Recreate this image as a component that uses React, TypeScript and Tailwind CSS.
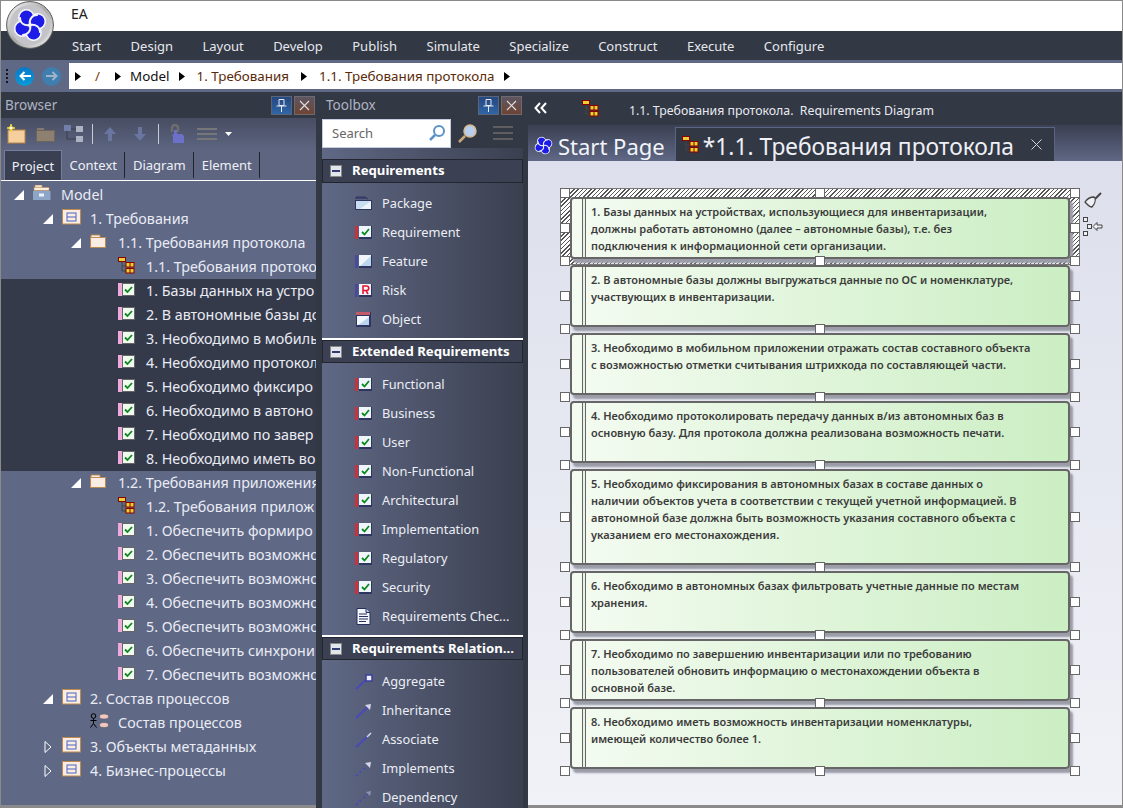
import { ReactNode } from 'react';

const SANS = "font-['Noto_Sans',sans-serif]";

const MENU = ['Start', 'Design', 'Layout', 'Develop', 'Publish', 'Simulate', 'Specialize', 'Construct', 'Execute', 'Configure'];

type Kind = 'model' | 'pkg' | 'folder' | 'diagram' | 'req' | 'usecase';
type Row = { depth: number; text: string; kind: Kind; arrow?: 'open' | 'closed'; dark?: boolean };

const TREE: Row[] = [
  { depth: 0, text: 'Model', kind: 'model', arrow: 'open' },
  { depth: 1, text: '1. Требования', kind: 'pkg', arrow: 'open' },
  { depth: 2, text: '1.1. Требования протокола', kind: 'folder', arrow: 'open' },
  { depth: 3, text: '1.1. Требования протоко', kind: 'diagram' },
  { depth: 3, text: '1. Базы данных на устро', kind: 'req', dark: true },
  { depth: 3, text: '2. В автономные базы до', kind: 'req', dark: true },
  { depth: 3, text: '3. Необходимо в мобиль', kind: 'req', dark: true },
  { depth: 3, text: '4. Необходимо протокол', kind: 'req', dark: true },
  { depth: 3, text: '5. Необходимо фиксиро', kind: 'req', dark: true },
  { depth: 3, text: '6. Необходимо в автоно', kind: 'req', dark: true },
  { depth: 3, text: '7. Необходимо по завер', kind: 'req', dark: true },
  { depth: 3, text: '8. Необходимо иметь во', kind: 'req', dark: true },
  { depth: 2, text: '1.2. Требования приложения', kind: 'folder', arrow: 'open' },
  { depth: 3, text: '1.2. Требования прилож', kind: 'diagram' },
  { depth: 3, text: '1. Обеспечить формиро', kind: 'req' },
  { depth: 3, text: '2. Обеспечить возможно', kind: 'req' },
  { depth: 3, text: '3. Обеспечить возможно', kind: 'req' },
  { depth: 3, text: '4. Обеспечить возможно', kind: 'req' },
  { depth: 3, text: '5. Обеспечить возможно', kind: 'req' },
  { depth: 3, text: '6. Обеспечить синхрони', kind: 'req' },
  { depth: 3, text: '7. Обеспечить возможно', kind: 'req' },
  { depth: 1, text: '2. Состав процессов', kind: 'pkg', arrow: 'open' },
  { depth: 2, text: 'Состав процессов', kind: 'usecase' },
  { depth: 1, text: '3. Объекты метаданных', kind: 'pkg', arrow: 'closed' },
  { depth: 1, text: '4. Бизнес-процессы', kind: 'pkg', arrow: 'closed' },
];

const CARDS = [
  { lines: ['1. Базы данных на устройствах, использующиеся для инвентаризации,', 'должны работать автономно (далее – автономные базы), т.е. без', 'подключения к информационной сети организации.'], h: 'h-[62px]' },
  { lines: ['2. В автономные базы должны выгружаться данные по ОС и номенклатуре,', 'участвующих в инвентаризации.'], h: 'h-[62px]' },
  { lines: ['3. Необходимо в мобильном приложении отражать состав составного объекта', 'с возможностью отметки считывания штрихкода по составляющей части.'], h: 'h-[62px]' },
  { lines: ['4. Необходимо протоколировать передачу данных в/из автономных баз в', 'основную базу. Для протокола должна реализована возможность печати.'], h: 'h-[62px]' },
  { lines: ['5. Необходимо фиксирования в автономных базах в составе данных о', 'наличии объектов учета в соответствии с текущей учетной информацией. В', 'автономной базе должна быть возможность указания составного объекта с', 'указанием его местонахождения.'], h: 'h-[96px]' },
  { lines: ['6. Необходимо в автономных базах фильтровать учетные данные по местам', 'хранения.'], h: 'h-[62px]' },
  { lines: ['7. Необходимо по завершению инвентаризации или по требованию', 'пользователей обновить информацию о местонахождении объекта в', 'основной базе.'], h: 'h-[62px]' },
  { lines: ['8. Необходимо иметь возможность инвентаризации номенклатуры,', 'имеющей количество более 1.'], h: 'h-[62px]' },
];

type Tool = 'package' | 'req' | 'feature' | 'risk' | 'object' | 'doc' | 'aggregate' | 'inherit' | 'assoc' | 'impl' | 'dep';

const TOOLBOX: { title: string; white: boolean; items: [string, Tool][] }[] = [
  { title: 'Requirements', white: false, items: [['Package', 'package'], ['Requirement', 'req'], ['Feature', 'feature'], ['Risk', 'risk'], ['Object', 'object']] },
  {
    title: 'Extended Requirements', white: true,
    items: [['Functional', 'req'], ['Business', 'req'], ['User', 'req'], ['Non-Functional', 'req'], ['Architectural', 'req'], ['Implementation', 'req'], ['Regulatory', 'req'], ['Security', 'req'], ['Requirements Chec...', 'doc']],
  },
  { title: 'Requirements Relation...', white: true, items: [['Aggregate', 'aggregate'], ['Inheritance', 'inherit'], ['Associate', 'assoc'], ['Implements', 'impl'], ['Dependency', 'dep']] },
];

const LOBES = [
  [16.5, 16.5],
  [31.5, 16.5],
  [31.5, 31.5],
  [16.5, 31.5],
];

function Logo({ size, ring = true }: { size: number; ring?: boolean }) {
  return (
    <svg width={size} height={size} viewBox="0 0 48 48">
      <defs>
        <linearGradient id="ring" x1="0" y1="0" x2="1" y2="1">
          <stop offset="0" stopColor="#fafafa" />
          <stop offset="0.5" stopColor="#a8a8a8" />
          <stop offset="1" stopColor="#f2f2f2" />
        </linearGradient>
      </defs>
      {ring && <circle cx="24" cy="24" r="23.400" fill="url(#ring)" stroke="#5a5a5a" strokeWidth="1" />}
      {ring && <circle cx="24" cy="24" r="20" fill="#c4c4c8" />}
      <g transform={ring ? 'translate(24 24) scale(.8) rotate(20) translate(-24 -24)' : 'rotate(20 24 24)'}>
        {LOBES.map(([x, y]) => (
          <circle key={`o${x}${y}`} cx={x} cy={y} r="10.500" fill="#f4f4ff" />
        ))}
        {LOBES.map(([x, y]) => (
          <circle key={`i${x}${y}`} cx={x} cy={y} r="8.500" fill="#1c1ce6" />
        ))}
        <g fill="none" stroke="#f4f4ff" strokeWidth="2.400">
          <path d="M24 24C20 18 22 11 29 9" />
          <path d="M24 24C30 20 37 22 39 29" />
          <path d="M24 24C28 30 26 37 19 39" />
          <path d="M24 24C18 28 11 26 9 19" />
        </g>
      </g>
    </svg>
  );
}

function Tri({ open }: { open: boolean }) {
  return open ? (
    <svg width="10" height="10" viewBox="0 0 10 10" className="shrink-0">
      <path d="M0 10L10 0V10Z" fill="#fff" />
    </svg>
  ) : (
    <svg width="8" height="12" viewBox="0 0 8 12" className="ml-[1px] mr-[1px] shrink-0">
      <path d="M1 .5L7 6 1 11.500Z" fill="none" stroke="#fff" />
    </svg>
  );
}

function TreeIcon({ kind }: { kind: Kind }) {
  if (kind === 'model')
    return (
      <svg width="18" height="16" viewBox="0 0 18 16">
        <path d="M2 0h7v3H2z" fill="#f4e2cc" stroke="#b98a55" strokeWidth=".6" />
        <path d="M1 2.500h15v3H1z" fill="#fbeede" stroke="#c09257" strokeWidth=".6" />
        <path d="M0 6h17.500v9H0z" fill="#8ca6c8" />
        <path d="M6 8.500h5v3H6z" fill="#eef2f8" />
      </svg>
    );
  if (kind === 'pkg')
    return (
      <svg width="19" height="16" viewBox="0 0 19 16">
        <rect x=".5" y=".5" width="18" height="14.500" fill="#fbece4" stroke="#bd8a50" />
        <rect x="5" y="4" width="9" height="8" fill="none" stroke="#4766c0" />
        <path d="M5 8h9" stroke="#4766c0" />
      </svg>
    );
  if (kind === 'folder')
    return (
      <svg width="17" height="15" viewBox="0 0 17 15">
        <path d="M1 3V1h9v2" fill="#fbece4" stroke="#bd8a50" />
        <rect x=".5" y="3.500" width="15" height="10" fill="#fbece4" stroke="#bd8a50" />
      </svg>
    );
  if (kind === 'diagram') return <DiagramIcon />;
  if (kind === 'req')
    return (
      <svg width="17" height="13" viewBox="0 0 17 13">
        <rect x="0" y="0" width="4" height="13" fill="#eeaadd" />
        <rect x="4.500" y=".5" width="12" height="12" fill="#f1faee" stroke="#666" />
        <path d="M7 6.500l2.500 2.500 4.500-5" fill="none" stroke="#0a8a1e" strokeWidth="1.800" />
      </svg>
    );
  return (
    <svg width="21" height="16" viewBox="0 0 21 16">
      <circle cx="3.500" cy="3" r="2.300" fill="none" stroke="#000" />
      <path d="M3.500 5.500v5M.5 7.500h6M3.500 10.500l-3 4M3.500 10.500l3 4" stroke="#000" fill="none" />
      <ellipse cx="14" cy="3.500" rx="4.500" ry="2.500" fill="#f3c6c3" stroke="#555" strokeWidth=".5" />
      <ellipse cx="14" cy="12" rx="4.500" ry="2.500" fill="#f3c6c3" stroke="#555" strokeWidth=".5" />
    </svg>
  );
}

function DiagramIcon() {
  return (
    <svg width="17" height="17" viewBox="0 0 17 17" className="shrink-0">
      <path d="M4 5v9h4M4 9h4" stroke="#444" fill="none" />
      <rect x=".5" y=".5" width="7" height="4" fill="#e6d232" stroke="#8c0000" />
      <rect x="8" y="5.500" width="8" height="4.500" fill="#e6d232" stroke="#8c0000" />
      <rect x="8" y="11.500" width="8" height="4.500" fill="#e6d232" stroke="#8c0000" />
      <path d="M12 5.500v4.500M12 11.500v4.500" stroke="#8c0000" />
    </svg>
  );
}

function ToolIcon({ t }: { t: Tool }) {
  const common = { width: 17, height: 15, viewBox: '0 0 17 15' };
  if (t === 'package')
    return (
      <svg {...common}>
        <path d="M1 3V1h9l3 2" fill="#3d4570" stroke="#2e3560" />
        <path d="M0 4h17v10H0z" fill="#2d3460" />
        <path d="M1 5h15v8H1z" fill="#c9ddf2" />
        <path d="M5 13L16 5v8z" fill="#eef4fb" />
      </svg>
    );
  if (t === 'doc')
    return (
      <svg {...common} height="17" viewBox="0 0 15 17">
        <path d="M1 .5h9l4 4v12H1z" fill="#f3f6fb" stroke="#27305c" />
        <path d="M3 6h8M3 8.500h9M3 11h9M3 13.500h7" stroke="#27305c" />
        <path d="M10 .5v4h4" fill="#b9cbe6" stroke="#27305c" />
      </svg>
    );
  if (t === 'aggregate' || t === 'inherit' || t === 'assoc' || t === 'impl' || t === 'dep') {
    const dash = t === 'impl' || t === 'dep' ? '2 3' : undefined;
    return (
      <svg width="18" height="16" viewBox="0 0 18 16">
        <path d="M1 15L13 4" stroke="#4a49b8" strokeWidth="2" strokeDasharray={dash} />
        {t === 'aggregate' && <rect x="11" y="1" width="6" height="6" fill="#eef" stroke="#3a3f9c" strokeWidth="1.500" />}
        {(t === 'inherit' || t === 'impl') && <path d="M16 1l-1 6-5-5z" fill="#d6d8ea" />}
        {t === 'assoc' && <path d="M12 5l4-4" stroke="#cfe2f2" strokeWidth="1.500" />}
        {t === 'dep' && <path d="M16 1l-1 5-4-4z" fill="#8f93b5" />}
      </svg>
    );
  }
  if (t === 'object')
    return (
      <svg {...common}>
        <rect x="1" y="0" width="15" height="15" fill="#2e3560" />
        <rect x="1" y="0" width="14" height="3" fill="#c25a68" />
        <rect x="2" y="4" width="12" height="9" fill="#f4f8fd" />
        <path d="M3 13L14 5v8z" fill="#bcd6f0" />
      </svg>
    );
  const fill = t === 'req' ? '#c8323c' : '#4a4a9a';
  return (
    <svg {...common}>
      <rect x="0" y="1" width="3" height="13" fill={fill} />
      <rect x="4" y="1" width="13" height="13" fill="#2e3560" />
      <rect x="4" y="1" width="12" height="11" fill="#f0f5fb" />
      {t === 'req' && <path d="M7 7l2.500 2.500L14 4" fill="none" stroke="#0a8a1e" strokeWidth="1.800" />}
      {t === 'feature' && <path d="M5 12L16 2v10z" fill="#bcd6f0" />}
      {t === 'risk' && <path d="M8 11V3h3.500a2 2 0 010 4.500H8M11 7.500L13 11" fill="none" stroke="#e8142c" strokeWidth="1.600" />}
    </svg>
  );
}

function PaneButtons() {
  return (
    <div className="flex gap-[2px]">
      <div className="flex h-[19px] w-[21px] items-center justify-center border border-[#5c6478] bg-gradient-to-b from-[#25487f] to-[#2f66a8]">
        <svg width="11" height="13" viewBox="0 0 11 13" fill="none" stroke="#e6e9f0">
          <path d="M3 .5h5v6H3zM.5 7h10M5.500 7v6" />
        </svg>
      </div>
      <div className="flex h-[19px] w-[21px] items-center justify-center border border-[#6e6a70] bg-gradient-to-b from-[#5d5560] to-[#6f4433]">
        <svg width="11" height="11" viewBox="0 0 11 11" stroke="#ddd" strokeWidth="1.200">
          <path d="M1 1l9 9M10 1l-9 9" />
        </svg>
      </div>
    </div>
  );
}

function Crumb({ children }: { children?: ReactNode }) {
  return (
    <>
      <svg width="6" height="9" viewBox="0 0 6 9" className="shrink-0">
        <path d="M0 0l6 4.500L0 9z" fill="#000" />
      </svg>
      {children}
    </>
  );
}

function Handle({ className }: { className: string }) {
  return <div className={`absolute z-20 h-[10px] w-[10px] border border-[#666] bg-white ${className}`} />;
}

function Card({ lines, h, first }: { lines: string[]; h: string; first: boolean }) {
  return (
    <div className={`relative w-[500px] ${h}`}>
      {first && (
        <div className="absolute -left-[10px] -right-[10px] -top-[9px] -bottom-[6px] border border-[#777] bg-[repeating-linear-gradient(135deg,#555_0,#555_1px,#fff_1px,#fff_3px)]" />
      )}
      <div className="absolute inset-0 flex overflow-hidden rounded-[4px] border-2 border-[#666] bg-gradient-to-r from-[#f4fbf1] to-[#cbeec3] shadow-[3px_4px_2px_#9a9ca8]">
        <div className="ml-[10px] h-full w-[4px] shrink-0 border-x border-[#666] bg-[#e8f2e4]" />
        <div className="pl-[5px] pt-[4px] text-[11px] font-semibold leading-[17px] text-[#3c3c3c] whitespace-nowrap">
          {lines.map((l) => (
            <div key={l}>{l}</div>
          ))}
        </div>
      </div>
      {first && (
        <>
          <Handle className="-left-[10px] -top-[9px]" />
          <Handle className="left-[245px] -top-[9px]" />
          <Handle className="-right-[10px] -top-[9px]" />
        </>
      )}
      <Handle className="-left-[10px] top-1/2 -translate-y-1/2" />
      <Handle className="-right-[10px] top-1/2 -translate-y-1/2" />
      <Handle className="-left-[10px] -bottom-[7px]" />
      <Handle className="left-[245px] -bottom-[7px]" />
      <Handle className="-right-[10px] -bottom-[7px]" />
      {first && (
        <>
          <svg width="19" height="17" viewBox="0 0 19 17" className="absolute left-[514px] -top-[5px]">
            <path d="M17 1l-6 6" stroke="#444" strokeWidth="2" />
            <path d="M10 5c-3 0-7 2-9 5 2 2 4 5 7 5 2-2 4-6 3-9z" fill="#eef0f5" stroke="#444" strokeWidth="1.300" />
          </svg>
          <svg width="21" height="20" viewBox="0 0 21 20" className="absolute left-[512px] top-[20px]" fill="#eef0f5" stroke="#444">
            <rect x="1.500" y=".5" width="4" height="4" />
            <rect x="5.500" y="7.500" width="4" height="4" />
            <rect x="1.500" y="14.500" width="4" height="4" />
            <path d="M11 9.500l4-4v2.500h5v3h-5v2.500z" />
          </svg>
        </>
      )}
    </div>
  );
}

export default function App() {
  return (
    <div className={`${SANS} relative flex h-[808px] w-[1123px] flex-col overflow-hidden border-t border-l border-r border-[#8a8a8a] bg-[#323844] text-[14px]`}>
      <div className="absolute left-[5px] top-0 z-30">
        <Logo size={48} />
      </div>

      {/* title + ribbon menu */}
      <div className="flex h-[30px] shrink-0 items-center bg-white pb-[5px] pl-[70px] text-[14px] text-[#222]">EA</div>
      <div className="flex h-[29px] shrink-0 items-center gap-[29.400px] bg-[#323844] pl-[71px] pt-[3px] text-[13px] text-[#e6e8ee]">
        {MENU.map((m) => (
          <span key={m}>{m}</span>
        ))}
      </div>

      {/* address bar */}
      <div className="flex h-[32px] shrink-0 items-start bg-[#5f6885]">
        <div className="flex h-[29px] w-[68px] shrink-0 items-center pl-[5px] pt-[3px]">
          <div className="mr-[3px] flex h-[14px] w-[2px] flex-col justify-between">
            {[0, 1, 2, 3].map((i) => (
              <div key={i} className="h-[2px] w-[2px] bg-[#16181f]" />
            ))}
          </div>
          <div className="ml-[4px] flex h-[19px] w-[19px] items-center justify-center rounded-full bg-gradient-to-b from-[#0a78c8] to-[#0a9ad8] text-white">
            <svg width="12" height="10" viewBox="0 0 12 10" fill="none" stroke="#fff" strokeWidth="2">
              <path d="M12 5H2M5.500 1L1.500 5l4 4" />
            </svg>
          </div>
          <div className="ml-[8px] flex h-[19px] w-[19px] items-center justify-center rounded-full bg-[#3f7fb0]">
            <svg width="12" height="10" viewBox="0 0 12 10" fill="none" stroke="#9fb4c8" strokeWidth="2">
              <path d="M0 5h10M6.500 1l4 4-4 4" />
            </svg>
          </div>
        </div>
        <div className="mt-[3px] flex h-[26px] flex-1 items-center bg-white pl-[6px] text-[13.400px] text-[#111]">
          <Crumb />
          <span className="ml-[14px] mr-[15px] text-[#7a3a10]">/</span>
          <Crumb />
          <span className="ml-[9px] mr-[10px]">Model</span>
          <Crumb />
          <span className="ml-[11px] mr-[12px] text-[#5a2a08]">1. Требования</span>
          <Crumb />
          <span className="ml-[12px] mr-[10px] text-[#5a2a08]">1.1. Требования протокола</span>
          <Crumb />
        </div>
      </div>

      <div className="flex min-h-0 flex-1">
        {/* browser */}
        <div className="flex w-[315px] shrink-0 flex-col">
          <div className="flex h-[26px] shrink-0 items-center justify-between pl-[4px] pr-[1px] text-[#aeb3c2] text-[13.500px]">
            Browser
            <PaneButtons />
          </div>
          <div className="flex h-[32px] shrink-0 items-center bg-gradient-to-b from-[#474d62] to-[#5d6581] pl-[5px]">
            <svg width="21" height="20" viewBox="0 0 21 20">
              <rect x="2" y="6" width="17" height="13" fill="#f5cf9e" stroke="#b78444" />
              <path d="M5 0l1 3 3 1-3 1-1 3-1-3-3-1 3-1z" fill="#fff" stroke="#e8d030" />
            </svg>
            <svg width="20" height="16" viewBox="0 0 20 16" className="ml-[9px]">
              <path d="M1 2h7v2H1z" fill="#85786c" />
              <rect x=".5" y="4.500" width="18" height="11" fill="#8d8070" stroke="#6f6459" />
            </svg>
            <svg width="20" height="18" viewBox="0 0 20 18" fill="#aeb3c4" className="ml-[8px]">
              <rect x="0" y="0" width="7" height="6" fill="#6f7fa8" />
              <rect x="12" y="1" width="7" height="6" />
              <rect x="12" y="11" width="7" height="6" />
              <path d="M3 6v8h9M7 4h5" stroke="#3a3f50" fill="none" />
            </svg>
            <div className="ml-[8px] h-[20px] w-[1px] bg-[#c8ccd8]" />
            <svg width="14" height="16" viewBox="0 0 14 16" fill="#6a76a0" className="ml-[10px]">
              <path d="M7 1l6 7H9v7H5V8H1z" />
            </svg>
            <svg width="14" height="16" viewBox="0 0 14 16" fill="#6a76a0" className="ml-[16px]">
              <path d="M7 15l6-7H9V1H5v7H1z" />
            </svg>
            <div className="ml-[11px] h-[20px] w-[1px] bg-[#c8ccd8]" />
            <svg width="16" height="20" viewBox="0 0 16 20" className="ml-[10px]">
              <path d="M3 8V4a3 3 0 016 0v4" fill="none" stroke="#6e6e6e" strokeWidth="2.500" />
              <path d="M4 19v-6l-1-2 2-1V6h3v4h5l2 2v7z" fill="#6c70c8" />
            </svg>
            <div className="ml-[12px] flex w-[20px] flex-col gap-[3px]">
              <div className="h-[2px] bg-[#77777a]" />
              <div className="h-[2px] bg-[#77777a]" />
              <div className="h-[2px] bg-[#77777a]" />
            </div>
            <svg width="7" height="4" viewBox="0 0 7 4" className="ml-[8px]">
              <path d="M0 0h7L3.500 4z" fill="#fff" />
            </svg>
          </div>
          <div className="flex h-[31px] shrink-0 items-stretch border-b border-white bg-[#5d6581] pl-[3px] text-[13px] text-[#eef0f6]">
            <div className="flex w-[58px] items-center justify-center border-x border-t border-[#747d9b] bg-[#3a4052] pt-[2px]">Project</div>
            {['Context', 'Diagram', 'Element'].map((t) => (
              <div key={t} className="my-[2px] flex items-center border-r border-[#20242e] px-[7.500px] pt-[2px]">
                {t}
              </div>
            ))}
          </div>
          <div className="min-h-0 flex-1 overflow-hidden bg-[#5f6885] pt-[2px] text-[14.300px]">
            {TREE.map((r) => (
              <div
                key={r.depth + r.text + r.kind}
                className={`flex h-[24px] items-center overflow-hidden whitespace-nowrap text-[#e9ecf5] ${r.dark ? 'bg-[#353a4a]' : ''}`}
                style={{ paddingLeft: (r.depth > 0 ? 15 : 14) + r.depth * 28 }}
              >
                <div className="-ml-[1px] flex w-[19px] shrink-0 items-center">{r.arrow && <Tri open={r.arrow === 'open'} />}</div>
                <div className="-mt-[4px] w-[28px] shrink-0">
                  <TreeIcon kind={r.kind} />
                </div>
                <span>{r.text}</span>
              </div>
            ))}
          </div>
          <div className="h-[3px] shrink-0 bg-[#8a8a8a]" />
        </div>

        <div className="w-[6px] shrink-0 bg-[#323844]" />

        {/* toolbox */}
        <div className="flex w-[201px] shrink-0 flex-col">
          <div className="flex h-[26px] shrink-0 items-center justify-between pl-[4px] pr-[1px] text-[13.500px] text-[#aeb3c2]">
            Toolbox
            <PaneButtons />
          </div>
          <div className="flex h-[30px] shrink-0 items-center">
            <div className="flex h-[29px] w-[129px] items-center justify-between border border-[#c6cbe0] bg-white pl-[9px] pr-[4px] text-[13px] text-[#666]">
              <span className="pt-[1px]">Search</span>
              <svg width="18" height="18" viewBox="0 0 18 18" fill="none">
                <circle cx="11" cy="7" r="5" stroke="#5b93c8" strokeWidth="2" />
                <path d="M7 11l-5 5" stroke="#5b93c8" strokeWidth="2.500" />
              </svg>
            </div>
            <svg width="21" height="21" viewBox="0 0 21 21" fill="none" className="ml-[6px]">
              <circle cx="13" cy="8" r="6" fill="#b9cdec" stroke="#d4b890" strokeWidth="1.500" />
              <path d="M8 13l-6 6" stroke="#c9a97a" strokeWidth="2.500" />
            </svg>
            <div className="ml-[15px] flex w-[20px] flex-col gap-[4px]">
              <div className="h-[2px] bg-[#5e5e60]" />
              <div className="h-[2px] bg-[#5e5e60]" />
              <div className="h-[2px] bg-[#5e5e60]" />
            </div>
          </div>
          <div className="min-h-0 flex-1 overflow-hidden bg-gradient-to-r from-[#5f6885] to-[#3b4050] pb-[3px]">
            {TOOLBOX.map((s) => (
              <div key={s.title}>
                {s.white && <div className="mt-[4px] h-[2px] bg-white" />}
                <div className={`${s.white ? 'h-[23px]' : 'mt-[11px] h-[24px]'} flex items-center border border-[#23262f] bg-[#3b4153] pl-[7px] text-[13.200px] font-bold text-white`}>
                  <div className="mr-[10px] flex h-[12px] w-[12px] items-center justify-center border border-[#888] bg-[#e4e6ee]">
                    <div className="h-[2px] w-[8px] bg-[#333c70]" />
                  </div>
                  {s.title}
                </div>
                <div className={s.white ? 'pt-[7px]' : 'pt-[6px]'}>
                  {s.items.map(([name, t]) => (
                    <div key={name} className="flex h-[29px] items-center whitespace-nowrap pl-[33px] text-[12.800px] text-[#eceef5]">
                      <div className="flex w-[27px] shrink-0 items-center">
                        <ToolIcon t={t} />
                      </div>
                      {name}
                    </div>
                  ))}
                </div>
              </div>
            ))}
          </div>
        </div>

        <div className="w-[5px] shrink-0 bg-[#323844]" />

        {/* diagram view */}
        <div className="flex min-w-0 flex-1 flex-col">
          <div className="flex h-[33px] shrink-0 items-center bg-[#323844] pl-[6px] text-[12.300px] text-[#e9ebf2]">
            <svg width="13" height="12" viewBox="0 0 13 12" fill="none" stroke="#fff" strokeWidth="2" className="-mt-[2px]">
              <path d="M6 1L1.500 6 6 11M12 1L7.500 6l4.500 5" />
            </svg>
            <div className="ml-[35px] mr-[30px]">
              <DiagramIcon />
            </div>
            <span className="whitespace-pre pt-[5px]">1.1. Требования протокола.  Requirements Diagram</span>
          </div>
          <div className="flex h-[36px] shrink-0 items-end bg-gradient-to-b from-[#3b4052] to-[#5f6885] pl-[5px]">
            <div className="flex h-[36px] items-center pt-[5px] text-[22px] text-[#f2f4fa]">
              <Logo size={21} ring={false} />
              <span className="ml-[4px] leading-none">Start Page</span>
            </div>
            <div className="ml-[10px] flex h-[34px] w-[380px] items-center border-x border-t border-[#5a6484] bg-[#333845] pl-[6px] text-[22.800px] text-[#eef0f7]">
              <DiagramIcon />
              <span className="ml-[4px] whitespace-nowrap pt-[5px] leading-none">*1.1. Требования протокола</span>
              <svg width="11" height="11" viewBox="0 0 11 11" stroke="#cfd3de" className="ml-auto mr-[12px]">
                <path d="M.5.5l10 10M10.500.5l-10 10" />
              </svg>
            </div>
          </div>
          <div className="flex min-h-0 flex-1 flex-col gap-[6px] bg-gradient-to-b from-[#dde0ec] to-[#f1f2f7] pl-[42px] pt-[36px]">
            {CARDS.map((c, i) => (
              <Card key={i} lines={c.lines} h={c.h} first={i === 0} />
            ))}
          </div>
          <div className="h-[3px] shrink-0 bg-[#8a8a8a]" />
        </div>
      </div>
    </div>
  );
}
